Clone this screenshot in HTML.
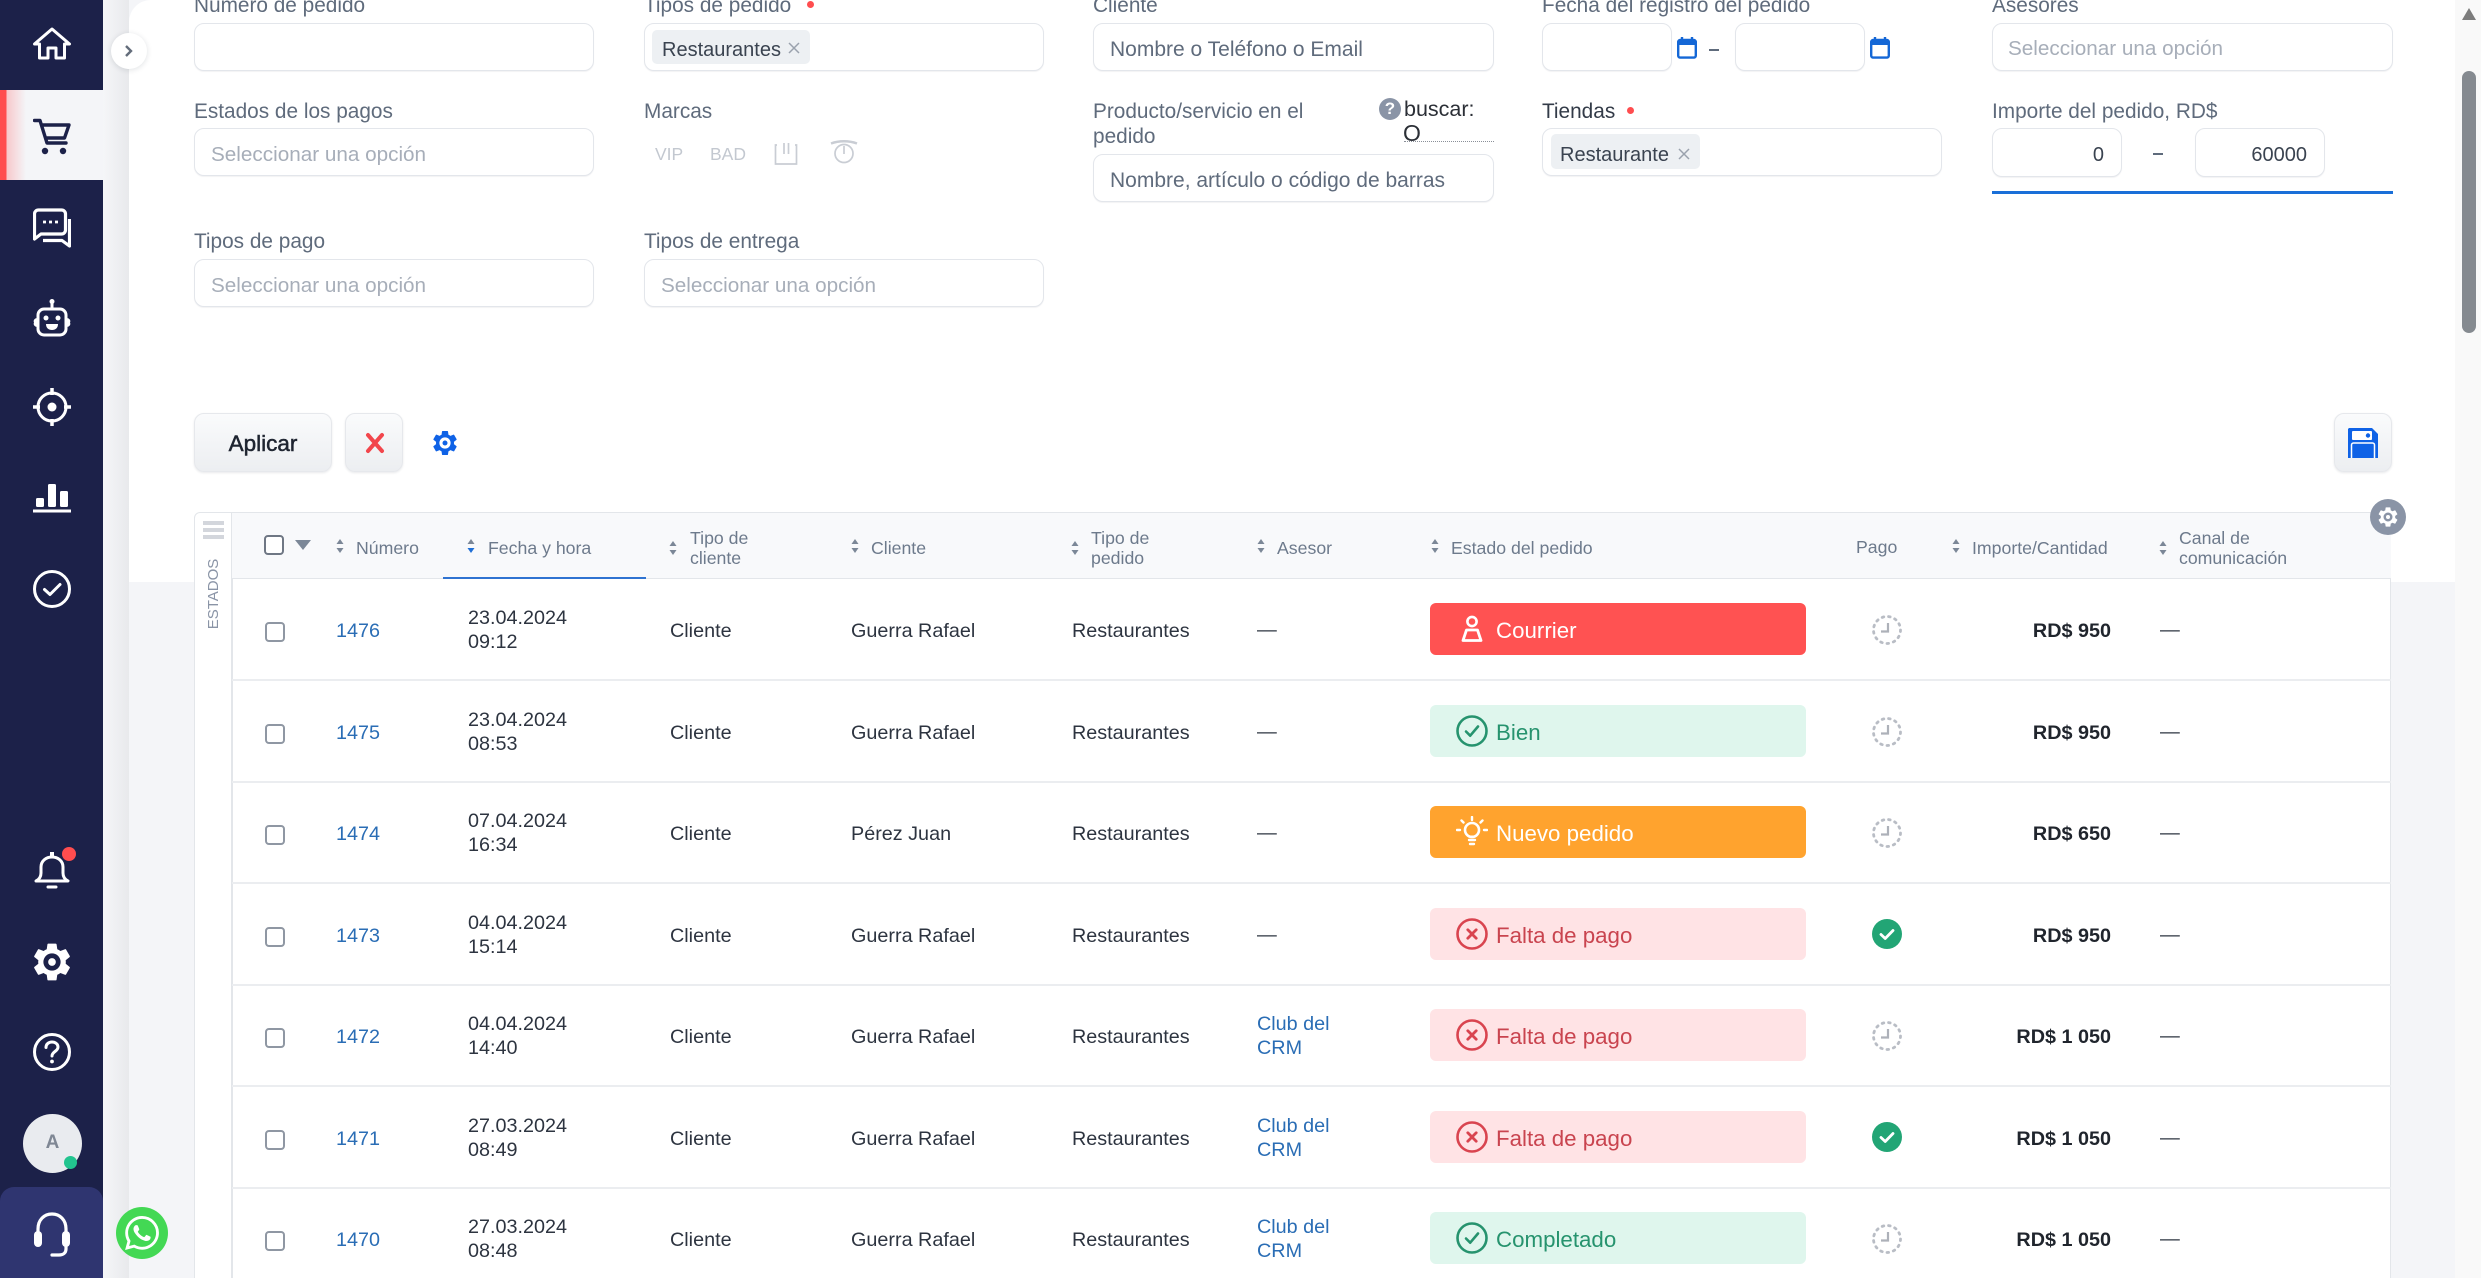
<!DOCTYPE html>
<html lang="es">
<head>
<meta charset="utf-8">
<title>Pedidos</title>
<style>
html,body{margin:0;padding:0;width:2481px;height:1278px;overflow:hidden;background:#f4f5f8;font-family:"Liberation Sans",Arial,sans-serif;color:#2d3440}
*{box-sizing:border-box}
#w{position:absolute;left:0;top:0;width:2481px;height:1278px;overflow:hidden;background:#f4f5f8}
.a{position:absolute}
.t{position:absolute;white-space:nowrap;line-height:24px;height:24px}
.lb{font-size:20.8px;color:#5f6b7c}
.ph{font-size:20.7px;color:#a7aeb9}
.ph2{font-size:21px;color:#5f6b7c}
.in{position:absolute;background:#fff;border:1.5px solid #e3e6eb;border-radius:10px;box-shadow:0 1px 1px rgba(30,40,60,.06)}
.chip{position:absolute;background:#edf0f3;border-radius:5px}
.red{position:absolute;width:7px;height:7px;border-radius:50%;background:#ff4d4f}
.btn{position:absolute;border:1.5px solid #e6e8ec;border-radius:10px;background:linear-gradient(#fafbfc,#eceef1);box-shadow:0 1px 2px rgba(30,40,60,.1)}
.th{font-size:17.7px;color:#6d7a8c;line-height:20px;height:20px}
.sort{position:absolute;width:8px;height:16px}
.row{position:absolute;left:232px;width:2159px;height:103px;background:transparent;border-bottom:2px solid #ebedf0}
.c{position:absolute;font-size:19.8px;line-height:24px;height:24px;white-space:nowrap;color:#2d3440}
.num{color:#2a6db5}
.cb{position:absolute;left:33px;top:44px;width:20px;height:20px;border:2px solid #8f97a3;border-radius:4px;background:#fff}
.st{position:absolute;left:1198px;top:25px;width:376px;height:52px;border-radius:6px;font-size:22.3px;line-height:55px;padding-left:66px}
.st svg{position:absolute;left:26px;top:10px;width:32px;height:32px}
.r{background:#ff5252;color:#fff}.g{background:#dff6ed;color:#26936e}.o{background:#ffa32e;color:#fff}.p{background:#ffe3e5;color:#c9444f}
.pg{position:absolute;left:1640px;top:37px;width:30px;height:30px}
.amt{position:absolute;right:280px;top:41px;font-size:19.8px;font-weight:bold;line-height:24px;color:#20252d;white-space:nowrap}
.nav{position:absolute;left:33px;width:38px;height:38px}
</style>
</head>
<body>
<div id="w">
<svg width="0" height="0" style="position:absolute">
<defs>
<symbol id="gear" viewBox="0 0 24 24"><path fill-rule="evenodd" d="M19.14 12.94c.04-.3.06-.61.06-.94 0-.32-.02-.64-.07-.94l2.03-1.58a.49.49 0 0 0 .12-.61l-1.92-3.32a.488.488 0 0 0-.59-.22l-2.39.96c-.5-.38-1.03-.7-1.62-.94l-.36-2.54a.484.484 0 0 0-.48-.41h-3.84c-.24 0-.43.17-.47.41l-.36 2.54c-.59.24-1.13.57-1.62.94l-2.39-.96c-.22-.08-.47 0-.59.22L2.74 8.87c-.12.21-.08.47.12.61l2.03 1.58c-.05.3-.09.63-.09.94s.02.64.07.94l-2.03 1.58a.49.49 0 0 0-.12.61l1.92 3.32c.12.22.37.29.59.22l2.39-.96c.5.38 1.03.7 1.62.94l.36 2.54c.05.24.24.41.48.41h3.84c.24 0 .44-.17.47-.41l.36-2.54c.59-.24 1.13-.56 1.62-.94l2.39.96c.22.08.47 0 .59-.22l1.92-3.32c.12-.22.07-.47-.12-.61l-2.01-1.58zM12 16.5a4.5 4.5 0 1 1 0-9 4.5 4.5 0 0 1 0 9z"/><circle cx="12" cy="12" r="2"/></symbol>
<symbol id="sort" viewBox="0 0 8 16"><path d="M4 1 7.500 6H.5z" fill="#7b8797"/><path d="M4 15 .5 10h7z" fill="#7b8797"/></symbol>
<symbol id="sortb" viewBox="0 0 8 16"><path d="M4 1 7.500 6H.5z" fill="#7b8797"/><path d="M4 15 .5 10h7z" fill="#1f6fd6"/></symbol>
<symbol id="clock" viewBox="0 0 30 30"><circle cx="15" cy="15" r="13.500" fill="none" stroke="#b9bdc5" stroke-width="2.800" stroke-dasharray="1.600 4.900" stroke-linecap="round"/><path d="M16 8v8.500H9" fill="none" stroke="#adb1b9" stroke-width="2.200"/></symbol>
<symbol id="paid" viewBox="0 0 30 30"><circle cx="15" cy="15" r="15" fill="#22a575"/><path d="M9 15.500l4.200 4L21 11.500" fill="none" stroke="#fff" stroke-width="2.800" stroke-linecap="round" stroke-linejoin="round"/></symbol>
<symbol id="okc" viewBox="0 0 32 32"><circle cx="16" cy="16" r="14.500" fill="none" stroke="#26936e" stroke-width="2.600"/><path d="M10 16.500l4.200 4.200L22 11.500" fill="none" stroke="#26936e" stroke-width="2.600" stroke-linecap="round" stroke-linejoin="round"/></symbol>
<symbol id="xc" viewBox="0 0 32 32"><circle cx="16" cy="16" r="14.500" fill="none" stroke="#d9444f" stroke-width="2.600"/><path d="M11.800 11.800l8.400 8.400M20.200 11.800l-8.400 8.400" fill="none" stroke="#d9444f" stroke-width="2.800" stroke-linecap="round"/></symbol>
<symbol id="bulb" viewBox="0 0 32 32"><circle cx="16" cy="14" r="7" fill="none" stroke="#fff" stroke-width="2.600"/><path d="M13 24h6M14 28h4M16 1v3M5.500 4.500l2 2M26.500 4.500l-2 2M1 14h3M28 14h3" fill="none" stroke="#fff" stroke-width="2.400" stroke-linecap="round"/><path d="M13 20.500h6" stroke="#fff" stroke-width="2"/></symbol>
<symbol id="user" viewBox="0 0 32 32"><circle cx="16" cy="8.500" r="4.600" fill="none" stroke="#fff" stroke-width="2.600"/><path d="M10.500 17h11l3.500 10.500H7z" fill="none" stroke="#fff" stroke-width="2.800" stroke-linejoin="round"/></symbol>
<symbol id="cal" viewBox="0 0 20 22"><path d="M5 0v4M15 0v4" stroke="#1467d6" stroke-width="2.400"/><rect x="1.200" y="3" width="17.600" height="17.600" rx="2" fill="none" stroke="#1467d6" stroke-width="2.400"/><rect x="1" y="3" width="18" height="5" fill="#1467d6"/></symbol>
</defs>
</svg>

<!-- main panels -->
<div class="a" style="left:103px;top:0;width:26px;height:1278px;background:linear-gradient(90deg,#f5f6f8,#e8e9ec)"></div>
<div class="a" style="left:129px;top:0;width:2326px;height:582px;background:#fff;border-top-left-radius:22px"></div>
<div class="a" style="left:2455px;top:0;width:26px;height:1278px;background:#f9f9f9"></div>
<svg class="a" style="left:2462px;top:8px" width="14" height="12"><path d="M7 0 14 12H0z" fill="#7c7c7c"/></svg>
<div class="a" style="left:2462px;top:71px;width:14px;height:262px;background:#858a90;border-radius:7px"></div>

<!-- sidebar -->
<div class="a" style="left:0;top:0;width:103px;height:1278px;background:#1c2149"></div>
<div class="a" style="left:0;top:90px;width:103px;height:90px;background:linear-gradient(90deg,#ff4d4f 0,#ff4d4f 6px,#f7c9cc 7px,#f4f5f8 26px)"></div>
<div class="a" style="left:0;top:1187px;width:103px;height:91px;background:#2f3570;border-radius:14px 14px 0 0"></div>

<svg class="nav" style="top:25px" viewBox="0 0 38 38" fill="none" stroke="#fff" stroke-width="3" stroke-linejoin="round" stroke-linecap="round"><path d="M1.500 19 19 4l17.500 15h-5v14H23V23h-8v10H6.500V19z"/></svg>
<svg class="nav" style="top:118px" viewBox="0 0 38 38" fill="none" stroke="#1c2149" stroke-width="3.400" stroke-linecap="round" stroke-linejoin="round"><path d="M1.500 2.500H7L14 25h19M8.500 7H36l-4.500 13H12.500"/><circle cx="12" cy="33" r="3.200" fill="#1c2149" stroke="none"/><circle cx="30" cy="33" r="3.200" fill="#1c2149" stroke="none"/></svg>
<svg class="nav" style="top:208px;height:40px" viewBox="0 0 38 40" fill="none" stroke="#fff" stroke-width="3.200" stroke-linejoin="round"><path d="M5.500 2h23a4 4 0 0 1 4 4v16a4 4 0 0 1-4 4H8l-6.500 5V6a4 4 0 0 1 4-4z"/><path d="M36.500 11v27L29 32.500H10"/><path d="M10 14h3M16 14h3M22 14h3" stroke-width="2.800"/></svg>
<svg class="nav" style="top:298px;height:40px" viewBox="0 0 38 40" fill="none" stroke="#fff" stroke-width="3"><rect x="5" y="11" width="28" height="26" rx="6"/><path d="M19 3v8"/><circle cx="19" cy="3.500" r="2.500" fill="#fff" stroke="none"/><path d="M1 24.500a3 3 0 0 1 4-4v8a3 3 0 0 1-4-4zM37 24.500a3 3 0 0 0-4-4v8a3 3 0 0 0 4-4z" fill="#fff" stroke="none"/><circle cx="13" cy="20" r="2.500" fill="#fff" stroke="none"/><circle cx="25" cy="20" r="2.500" fill="#fff" stroke="none"/><path d="M13 26h12c0 4-2.500 6-6 6s-6-2-6-6z" fill="#fff" stroke="none"/></svg>
<svg class="nav" style="top:388px" viewBox="0 0 38 38" fill="none" stroke="#fff" stroke-width="3"><circle cx="19" cy="19" r="14"/><circle cx="19" cy="19" r="4.500" fill="#fff" stroke="none"/><path d="M19 0v7M19 31v7M0 19h7M31 19h7" stroke-width="3.500"/></svg>
<svg class="nav" style="top:476px" viewBox="0 0 38 38" fill="#fff"><rect x="3" y="22" width="8" height="9" rx="1.500"/><rect x="15" y="8" width="8" height="23" rx="1.500"/><rect x="27" y="15" width="8" height="16" rx="1.500"/><rect x="0" y="33.500" width="38" height="3"/></svg>
<svg class="nav" style="top:570px" viewBox="0 0 38 38" fill="none" stroke="#fff" stroke-width="3" stroke-linecap="round" stroke-linejoin="round"><circle cx="19" cy="19" r="17.500"/><path d="M11.500 19.500l5.500 5 10-10"/></svg>

<svg class="nav" style="top:852px" viewBox="0 0 38 38" fill="none" stroke="#fff" stroke-width="3" stroke-linejoin="round" stroke-linecap="round"><path d="M3 29c3-1.500 5-4 5-8v-6c0-6 5-10 11-10s11 4 11 10v6c0 4 2 6.500 5 8z"/><path d="M15 35h8"/><path d="M19 0v4" stroke-width="4"/></svg>
<div class="a" style="left:62px;top:847px;width:14px;height:14px;border-radius:50%;background:#ff4d4f"></div>
<svg class="nav" style="top:939px;left:29px;width:46px;height:46px;fill:#fff"><use href="#gear"/></svg>
<svg class="nav" style="top:1033px" viewBox="0 0 38 38" fill="none" stroke="#fff" stroke-width="3" stroke-linecap="round"><circle cx="19" cy="19" r="17.500"/><path d="M13 14.500c0-3.500 2.800-5.500 6-5.500s6 2 6 5c0 4.500-6 4.500-6 9"/><circle cx="19" cy="28.500" r="1.900" fill="#fff" stroke="none"/></svg>
<div class="a" style="left:23px;top:1114px;width:59px;height:59px;border-radius:50%;background:#e9ebef;color:#7f8794;font-size:19px;font-weight:bold;text-align:center;line-height:58px">A</div>
<div class="a" style="left:64px;top:1156px;width:13px;height:13px;border-radius:50%;background:#22c48f"></div>
<svg class="nav" style="top:1212px;height:46px" viewBox="0 0 38 46" fill="none" stroke="#fff" stroke-width="3.200" stroke-linecap="round"><path d="M5 24V17C5 8 11 2 19 2s14 6 14 15v7"/><rect x="1" y="19" width="8" height="16" rx="4" fill="#fff" stroke="none"/><rect x="29" y="19" width="8" height="16" rx="4" fill="#fff" stroke="none"/><path d="M33 35v2c0 4-3 6-7 6h-7"/></svg>

<div class="a" style="left:111px;top:33px;width:36px;height:36px;border-radius:50%;background:#fff;box-shadow:0 1px 6px rgba(30,40,60,.14)"></div>
<svg class="a" style="left:124px;top:44px" width="10" height="14" fill="none" stroke="#646d7b" stroke-width="2.400"><path d="M2 2l5 5-5 5"/></svg>

<div class="a" style="left:116px;top:1207px;width:52px;height:52px;border-radius:50%;background:#43d854"></div>
<svg class="a" style="left:125px;top:1216px" width="34" height="34" viewBox="0 0 24 24" fill="#fff"><path d="M17.472 14.382c-.297-.149-1.758-.867-2.03-.967-.273-.099-.471-.148-.67.15-.197.297-.767.966-.94 1.164-.173.199-.347.223-.644.075-.297-.15-1.255-.463-2.39-1.475-.883-.788-1.48-1.761-1.653-2.059-.173-.297-.018-.458.13-.606.134-.133.298-.347.446-.52.149-.174.198-.298.298-.497.099-.198.05-.371-.025-.52-.075-.149-.669-1.612-.916-2.207-.242-.579-.487-.5-.669-.51-.173-.008-.371-.01-.57-.01-.198 0-.52.074-.792.372-.272.297-1.04 1.016-1.04 2.479 0 1.462 1.065 2.875 1.213 3.074.149.198 2.096 3.2 5.077 4.487.709.306 1.262.489 1.694.625.712.227 1.36.195 1.871.118.571-.085 1.758-.719 2.006-1.413.248-.694.248-1.289.173-1.413-.074-.124-.272-.198-.57-.347m-5.421 7.403h-.004a9.87 9.87 0 01-5.031-1.378l-.361-.214-3.741.982.998-3.648-.235-.374a9.86 9.86 0 01-1.51-5.26c.001-5.45 4.436-9.884 9.888-9.884 2.64 0 5.122 1.03 6.988 2.898a9.825 9.825 0 012.893 6.994c-.003 5.45-4.437 9.884-9.885 9.884m8.413-18.297A11.815 11.815 0 0012.05 0C5.495 0 .16 5.335.157 11.892c0 2.096.547 4.142 1.588 5.945L.057 24l6.305-1.654a11.882 11.882 0 005.683 1.448h.005c6.554 0 11.89-5.335 11.893-11.893a11.821 11.821 0 00-3.48-8.413z"/></svg>

<!-- filters row 1 -->
<div class="t lb" style="left:194px;top:-6px">Número de pedido</div>
<div class="in" style="left:194px;top:23px;width:400px;height:48px"></div>
<div class="t lb" style="left:644px;top:-6px">Tipos de pedido</div>
<div class="red" style="left:807px;top:1px"></div>
<div class="in" style="left:644px;top:23px;width:400px;height:48px"></div>
<div class="chip" style="left:652px;top:30px;width:158px;height:34px"></div>
<div class="t" style="left:662px;top:38px;font-size:20px;color:#3a4350">Restaurantes</div>
<svg class="a" style="left:788px;top:42px" width="12" height="12" stroke="#9aa2ad" stroke-width="1.500"><path d="M1 1l10 10M11 1 1 11"/></svg>
<div class="t lb" style="left:1093px;top:-6px">Cliente</div>
<div class="in" style="left:1093px;top:23px;width:401px;height:48px"></div>
<div class="t ph2" style="left:1110px;top:38px">Nombre o Teléfono o Email</div>
<div class="t lb" style="left:1542px;top:-6px">Fecha del registro del pedido</div>
<div class="in" style="left:1542px;top:23px;width:130px;height:48px"></div>
<svg class="a" style="left:1677px;top:37px" width="20" height="22"><use href="#cal"/></svg>
<div class="a" style="left:1709px;top:49px;width:10px;height:2px;background:#5f6b7c"></div>
<div class="in" style="left:1735px;top:23px;width:130px;height:48px"></div>
<svg class="a" style="left:1870px;top:37px" width="20" height="22"><use href="#cal"/></svg>
<div class="t lb" style="left:1992px;top:-6px">Asesores</div>
<div class="in" style="left:1992px;top:23px;width:401px;height:48px"></div>
<div class="t ph" style="left:2008px;top:37px">Seleccionar una opción</div>

<!-- filters row 2 -->
<div class="t lb" style="left:194px;top:100px">Estados de los pagos</div>
<div class="in" style="left:194px;top:128px;width:400px;height:48px"></div>
<div class="t ph" style="left:211px;top:143px">Seleccionar una opción</div>
<div class="t lb" style="left:644px;top:100px">Marcas</div>
<div class="t" style="left:655px;top:142px;font-size:17.500px;color:#c3c8d0">VIP</div>
<div class="t" style="left:710px;top:142px;font-size:17.500px;color:#c3c8d0">BAD</div>
<svg class="a" style="left:774px;top:142px" width="24" height="24" fill="none" stroke="#c9cdd4" stroke-width="1.700"><path d="M3 3H1.500v19h21V3H21M10 1v11M14.500 1v11"/></svg>
<svg class="a" style="left:830px;top:140px" width="28" height="24" fill="none" stroke="#c9cdd4" stroke-width="1.700"><path d="M1 3.500C9 .5 19 .5 27 3.500" stroke-width="2.500"/><circle cx="14" cy="13.500" r="9"/><path d="M14 6v8"/></svg>
<div class="t lb" style="left:1093px;top:100px">Producto/servicio en el</div>
<div class="t lb" style="left:1093px;top:125px">pedido</div>
<div class="a" style="left:1379px;top:98px;width:22px;height:22px;border-radius:50%;background:#8a94a6;color:#fff;font-size:17px;font-weight:bold;text-align:center;line-height:22px">?</div>
<div class="t" style="left:1404px;top:97px;font-size:21.500px;color:#2b2f36">buscar:</div>
<div class="t" style="left:1403px;top:121px;font-size:23px;color:#2b2f36">O</div>
<div class="a" style="left:1404px;top:141px;width:90px;height:0;border-top:1.500px dotted #8a8f98"></div>
<div class="in" style="left:1093px;top:154px;width:401px;height:48px"></div>
<div class="t ph2" style="left:1110px;top:169px">Nombre, artículo o código de barras</div>
<div class="t lb" style="left:1542px;top:100px;color:#333b48">Tiendas</div>
<div class="red" style="left:1627px;top:107px"></div>
<div class="in" style="left:1542px;top:128px;width:400px;height:48px"></div>
<div class="chip" style="left:1551px;top:134px;width:149px;height:35px"></div>
<div class="t" style="left:1560px;top:143px;font-size:20px;color:#3a4350">Restaurante</div>
<svg class="a" style="left:1678px;top:148px" width="12" height="12" stroke="#9aa2ad" stroke-width="1.500"><path d="M1 1l10 10M11 1 1 11"/></svg>
<div class="t lb" style="left:1992px;top:100px">Importe del pedido, RD$</div>
<div class="in" style="left:1992px;top:128px;width:130px;height:49px"></div>
<div class="t" style="left:2000px;width:104px;top:143px;font-size:20px;text-align:right;color:#3a4350">0</div>
<div class="a" style="left:2153px;top:153px;width:10px;height:2px;background:#5f6b7c"></div>
<div class="in" style="left:2195px;top:128px;width:130px;height:49px"></div>
<div class="t" style="left:2203px;width:104px;top:143px;font-size:20px;text-align:right;color:#3a4350">60000</div>
<div class="a" style="left:1992px;top:191px;width:401px;height:3px;background:#1a6fd8"></div>

<!-- filters row 3 -->
<div class="t lb" style="left:194px;top:230px">Tipos de pago</div>
<div class="in" style="left:194px;top:259px;width:400px;height:48px"></div>
<div class="t ph" style="left:211px;top:274px">Seleccionar una opción</div>
<div class="t lb" style="left:644px;top:230px">Tipos de entrega</div>
<div class="in" style="left:644px;top:259px;width:400px;height:48px"></div>
<div class="t ph" style="left:661px;top:274px">Seleccionar una opción</div>

<!-- buttons -->
<div class="btn" style="left:194px;top:413px;width:138px;height:59px"></div>
<div class="t" style="left:194px;width:138px;top:432px;font-size:22.500px;text-align:center;color:#1e2430;-webkit-text-stroke:.5px #1e2430">Aplicar</div>
<div class="btn" style="left:345px;top:413px;width:58px;height:59px"></div>
<svg class="a" style="left:365px;top:432px" width="20" height="22" stroke="#f2464c" stroke-width="4" stroke-linecap="round"><path d="M3 3l14 16M17 3 3 19"/></svg>
<svg class="a" style="left:430px;top:428px;fill:#0f62e6" width="30" height="30"><use href="#gear"/></svg>
<div class="btn" style="left:2334px;top:413px;width:58px;height:59px"></div>
<svg class="a" style="left:2348px;top:428px" width="30" height="30" viewBox="0 0 30 30"><path d="M1 0h23l6 6v24H0V1z" fill="#0f62e6"/><rect x="4" y="3" width="20" height="9" rx="1" fill="#fff"/><circle cx="20" cy="7.500" r="2.200" fill="#0f62e6"/><path d="M3.500 30V17a2 2 0 0 1 2-2h19a2 2 0 0 1 2 2v13" fill="none" stroke="#fff" stroke-width="1.500"/></svg>

<!-- table -->
<div class="a" style="left:194px;top:512px;width:2197px;height:766px;background:#fff;border:1.5px solid #e3e6ea;border-bottom:0;border-radius:6px 0 0 0"></div>
<div class="a" style="left:231px;top:513px;width:2160px;height:66px;background:#f8f9fb;border-bottom:1.5px solid #e3e6ea;border-left:1.5px solid #e3e6ea"></div>
<div class="a" style="left:231px;top:579px;width:1.5px;height:699px;background:#e3e6ea"></div>
<div class="a" style="left:203px;top:521px;width:21px;height:3.500px;background:#d3d6dc"></div>
<div class="a" style="left:203px;top:528px;width:21px;height:3.500px;background:#d3d6dc"></div>
<div class="a" style="left:203px;top:535px;width:21px;height:3.500px;background:#d3d6dc"></div>
<div class="a" style="left:166px;top:584px;width:96px;height:20px;font-size:15px;line-height:20px;text-align:center;color:#8a94a6;transform:rotate(-90deg)">ESTADOS</div>

<div class="a" style="left:264px;top:535px;width:20px;height:20px;border:2px solid #6f7784;border-radius:4px;background:#fff"></div>
<svg class="a" style="left:295px;top:540px" width="16" height="10"><path d="M0 0h16L8 10z" fill="#7b8797"/></svg>

<svg class="sort" style="left:336px;top:538px"><use href="#sort"/></svg>
<div class="t th" style="left:356px;top:538px">Número</div>
<svg class="sort" style="left:467px;top:538px"><use href="#sortb"/></svg>
<div class="t th" style="left:488px;top:538px">Fecha y hora</div>
<div class="a" style="left:443px;top:577px;width:203px;height:2px;background:#2f73d1"></div>
<svg class="sort" style="left:669px;top:540px"><use href="#sort"/></svg>
<div class="t th" style="left:690px;top:528px">Tipo de</div>
<div class="t th" style="left:690px;top:548px">cliente</div>
<svg class="sort" style="left:851px;top:538px"><use href="#sort"/></svg>
<div class="t th" style="left:871px;top:538px">Cliente</div>
<svg class="sort" style="left:1071px;top:540px"><use href="#sort"/></svg>
<div class="t th" style="left:1091px;top:528px">Tipo de</div>
<div class="t th" style="left:1091px;top:548px">pedido</div>
<svg class="sort" style="left:1257px;top:538px"><use href="#sort"/></svg>
<div class="t th" style="left:1277px;top:538px">Asesor</div>
<svg class="sort" style="left:1431px;top:538px"><use href="#sort"/></svg>
<div class="t th" style="left:1451px;top:538px">Estado del pedido</div>
<div class="t th" style="left:1856px;top:537px">Pago</div>
<svg class="sort" style="left:1952px;top:538px"><use href="#sort"/></svg>
<div class="t th" style="left:1972px;top:538px">Importe/Cantidad</div>
<svg class="sort" style="left:2159px;top:540px"><use href="#sort"/></svg>
<div class="t th" style="left:2179px;top:528px">Canal de</div>
<div class="t th" style="left:2179px;top:548px">comunicación</div>

<div class="row" style="top:578px">
<div class="cb"></div><div class="c num" style="left:104px;top:41px">1476</div>
<div class="c" style="left:236px;top:28px">23.04.2024</div><div class="c" style="left:236px;top:52px">09:12</div>
<div class="c" style="left:438px;top:41px">Cliente</div><div class="c" style="left:619px;top:41px">Guerra Rafael</div><div class="c" style="left:840px;top:41px">Restaurantes</div>
<div class="c" style="left:1025px;top:40px">—</div>
<div class="st r"><svg><use href="#user"/></svg>Courrier</div>
<svg class="pg"><use href="#clock"/></svg>
<div class="amt">RD$ 950</div><div class="c" style="left:1928px;top:40px">—</div>
</div>
<div class="row" style="top:680px">
<div class="cb"></div><div class="c num" style="left:104px;top:41px">1475</div>
<div class="c" style="left:236px;top:28px">23.04.2024</div><div class="c" style="left:236px;top:52px">08:53</div>
<div class="c" style="left:438px;top:41px">Cliente</div><div class="c" style="left:619px;top:41px">Guerra Rafael</div><div class="c" style="left:840px;top:41px">Restaurantes</div>
<div class="c" style="left:1025px;top:40px">—</div>
<div class="st g"><svg><use href="#okc"/></svg>Bien</div>
<svg class="pg"><use href="#clock"/></svg>
<div class="amt">RD$ 950</div><div class="c" style="left:1928px;top:40px">—</div>
</div>
<div class="row" style="top:781px">
<div class="cb"></div><div class="c num" style="left:104px;top:41px">1474</div>
<div class="c" style="left:236px;top:28px">07.04.2024</div><div class="c" style="left:236px;top:52px">16:34</div>
<div class="c" style="left:438px;top:41px">Cliente</div><div class="c" style="left:619px;top:41px">Pérez Juan</div><div class="c" style="left:840px;top:41px">Restaurantes</div>
<div class="c" style="left:1025px;top:40px">—</div>
<div class="st o"><svg><use href="#bulb"/></svg>Nuevo pedido</div>
<svg class="pg"><use href="#clock"/></svg>
<div class="amt">RD$ 650</div><div class="c" style="left:1928px;top:40px">—</div>
</div>
<div class="row" style="top:883px">
<div class="cb"></div><div class="c num" style="left:104px;top:41px">1473</div>
<div class="c" style="left:236px;top:28px">04.04.2024</div><div class="c" style="left:236px;top:52px">15:14</div>
<div class="c" style="left:438px;top:41px">Cliente</div><div class="c" style="left:619px;top:41px">Guerra Rafael</div><div class="c" style="left:840px;top:41px">Restaurantes</div>
<div class="c" style="left:1025px;top:40px">—</div>
<div class="st p"><svg><use href="#xc"/></svg>Falta de pago</div>
<svg class="pg" style="top:36px"><use href="#paid"/></svg>
<div class="amt">RD$ 950</div><div class="c" style="left:1928px;top:40px">—</div>
</div>
<div class="row" style="top:984px">
<div class="cb"></div><div class="c num" style="left:104px;top:41px">1472</div>
<div class="c" style="left:236px;top:28px">04.04.2024</div><div class="c" style="left:236px;top:52px">14:40</div>
<div class="c" style="left:438px;top:41px">Cliente</div><div class="c" style="left:619px;top:41px">Guerra Rafael</div><div class="c" style="left:840px;top:41px">Restaurantes</div>
<div class="c num" style="left:1025px;top:28px">Club del</div><div class="c num" style="left:1025px;top:52px">CRM</div>
<div class="st p"><svg><use href="#xc"/></svg>Falta de pago</div>
<svg class="pg"><use href="#clock"/></svg>
<div class="amt">RD$ 1 050</div><div class="c" style="left:1928px;top:40px">—</div>
</div>
<div class="row" style="top:1086px">
<div class="cb"></div><div class="c num" style="left:104px;top:41px">1471</div>
<div class="c" style="left:236px;top:28px">27.03.2024</div><div class="c" style="left:236px;top:52px">08:49</div>
<div class="c" style="left:438px;top:41px">Cliente</div><div class="c" style="left:619px;top:41px">Guerra Rafael</div><div class="c" style="left:840px;top:41px">Restaurantes</div>
<div class="c num" style="left:1025px;top:28px">Club del</div><div class="c num" style="left:1025px;top:52px">CRM</div>
<div class="st p"><svg><use href="#xc"/></svg>Falta de pago</div>
<svg class="pg" style="top:36px"><use href="#paid"/></svg>
<div class="amt">RD$ 1 050</div><div class="c" style="left:1928px;top:40px">—</div>
</div>
<div class="row" style="top:1187px">
<div class="cb"></div><div class="c num" style="left:104px;top:41px">1470</div>
<div class="c" style="left:236px;top:28px">27.03.2024</div><div class="c" style="left:236px;top:52px">08:48</div>
<div class="c" style="left:438px;top:41px">Cliente</div><div class="c" style="left:619px;top:41px">Guerra Rafael</div><div class="c" style="left:840px;top:41px">Restaurantes</div>
<div class="c num" style="left:1025px;top:28px">Club del</div><div class="c num" style="left:1025px;top:52px">CRM</div>
<div class="st g"><svg><use href="#okc"/></svg>Completado</div>
<svg class="pg"><use href="#clock"/></svg>
<div class="amt">RD$ 1 050</div><div class="c" style="left:1928px;top:40px">—</div>
</div>

<div class="a" style="left:2370px;top:499px;width:36px;height:36px;border-radius:50%;background:#8a94a6"></div>
<svg class="a" style="left:2376px;top:505px;fill:#fff" width="24" height="24"><use href="#gear"/></svg>
</div>
</body>
</html>
